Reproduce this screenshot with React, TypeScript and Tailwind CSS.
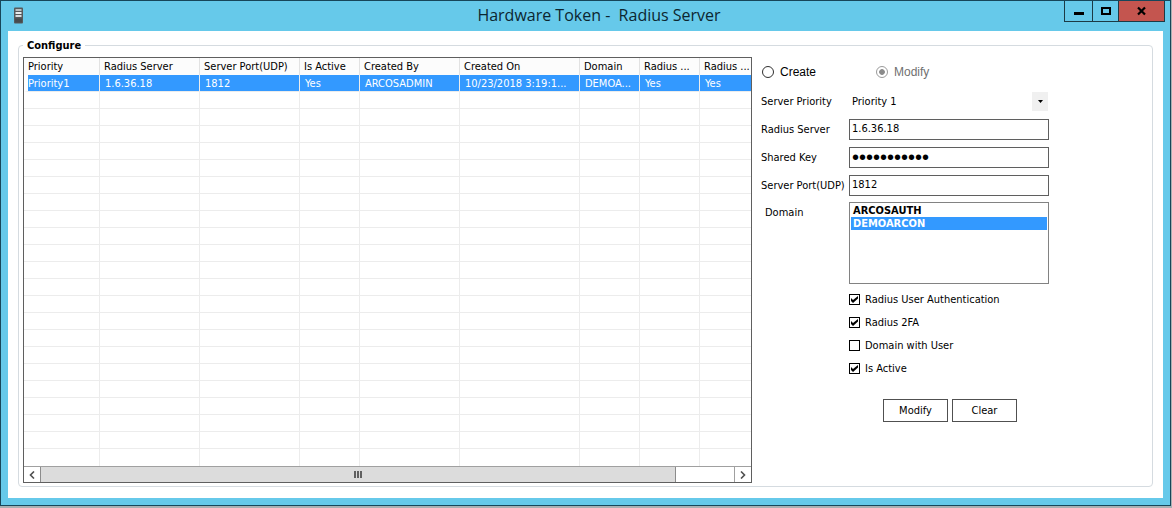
import { FC, ReactNode, useState } from "react";

const columns = [
  { label: "Priority", width: "w-[76px]", value: "Priority1" },
  { label: "Radius Server", width: "w-[100px]", value: "1.6.36.18" },
  { label: "Server Port(UDP)", width: "w-[100px]", value: "1812" },
  { label: "Is Active", width: "w-[60px]", value: "Yes" },
  { label: "Created By", width: "w-[100px]", value: "ARCOSADMIN" },
  { label: "Created On", width: "w-[120px]", value: "10/23/2018 3:19:1..." },
  { label: "Domain", width: "w-[60px]", value: "DEMOA..." },
  { label: "Radius ...", width: "w-[60px]", value: "Yes" },
  { label: "Radius ...", width: "", value: "Yes" },
];

const emptyRows = Array.from({ length: 22 });

const inputClass = "h-[21px] w-[200px] border border-[#5f5f5f] bg-white px-[2px] outline-none";

// Title bar =============================
const TitleBar: FC = () => (
  <header className="flex h-[30px] items-start">
    <div className="flex w-[126px] pl-[6px] pt-[6px]">
      <svg width="9" height="17" viewBox="0 0 9 17" aria-hidden="true">
        <rect x="0" y="0.5" width="9" height="16" rx="1" fill="#565a5c" />
        <rect x="1.5" y="2" width="6" height="2" fill="#b9bfc2" />
        <rect x="1.5" y="5" width="6" height="2" fill="#e8ecee" />
        <rect x="1.5" y="8" width="6" height="2" fill="#d8dcde" />
        <rect x="1" y="11.5" width="7" height="4" fill="#474b4d" />
      </svg>
    </div>
    <h1 className="flex-1 whitespace-pre text-center font-['Open_Sans','Noto_Sans',sans-serif] text-[16px] leading-[29px] text-[#0c2630]">
      {"Hardware Token -  Radius Server"}
    </h1>
    <div className="mr-[5px] flex h-[21px] border border-t-0 border-[#1c3a45]">
      <button aria-label="Minimize" className="flex w-7 justify-center border-r border-[#1c3a45]">
        <svg width="10" height="20" viewBox="0 0 10 20">
          <rect x="0" y="11" width="10" height="3" fill="#000" />
        </svg>
      </button>
      <button aria-label="Maximize" className="flex w-[26px] justify-center border-r border-[#1c3a45]">
        <svg width="10" height="20" viewBox="0 0 10 20">
          <rect x="1" y="7" width="8" height="6" fill="none" stroke="#000" strokeWidth="2" />
        </svg>
      </button>
      <button aria-label="Close" className="flex w-[45px] justify-center bg-[#c4554f]">
        <svg width="9" height="20" viewBox="0 0 9 20">
          <path d="M1 6.5 L8 13.5 M8 6.5 L1 13.5" stroke="#000" strokeWidth="2.2" />
        </svg>
      </button>
    </div>
  </header>
);

// Servers list =============================
const ServerTable: FC = () => (
  <div className="min-w-0 flex-1 border border-[#5f5f5f]">
    <table className="w-full table-fixed border-separate border-spacing-0 whitespace-nowrap text-left">
      <thead>
        <tr className="h-[17px]">
          {columns.map((col, i) => (
            <th
              key={i}
              className={`${col.width} border-r border-[#e2e2e2] bg-[#fcfcfc] p-0 pl-1 font-normal last:border-r-0`}
            >
              {col.label}
            </th>
          ))}
        </tr>
      </thead>
      <tbody>
        <tr className="h-[17px] text-white">
          {columns.map((col, i) => (
            <td
              key={i}
              className="border-b border-r border-[#ececec] bg-[#3399ff] p-0 pl-[5px] last:border-r-0 first:border-l-4 first:border-l-white first:pl-0"
            >
              {col.value}
            </td>
          ))}
        </tr>
        {emptyRows.map((_, row) => (
          <tr key={row} className="group h-[17px]">
            {columns.map((col, i) => (
              <td
                key={i}
                className="border-b border-r border-[#ececec] p-0 last:border-r-0 group-last:border-b-0"
              />
            ))}
          </tr>
        ))}
      </tbody>
    </table>
    <div className="flex h-4 border-t border-[#a0a0a0]">
      <button aria-label="Scroll left" className="flex w-4 items-center justify-center">
        <svg width="6" height="8" viewBox="0 0 6 8">
          <path d="M5 0.5 L1.5 4 L5 7.5" fill="none" stroke="#505050" strokeWidth="1.6" />
        </svg>
      </button>
      <div className="flex-1">
        <div className="flex h-full w-11/12 items-center justify-center gap-px border-x border-[#8c8c8c] bg-[#dcdcdc]">
          <span className="h-[7px] w-[2px] bg-[#606060]" />
          <span className="h-[7px] w-[2px] bg-[#606060]" />
          <span className="h-[7px] w-[2px] bg-[#606060]" />
        </div>
      </div>
      <button
        aria-label="Scroll right"
        className="flex w-[17px] items-center justify-center border-l border-[#a0a0a0]"
      >
        <svg width="6" height="8" viewBox="0 0 6 8">
          <path d="M1 0.5 L4.5 4 L1 7.5" fill="none" stroke="#505050" strokeWidth="1.6" />
        </svg>
      </button>
    </div>
  </div>
);

const Field: FC<{ id: string; label: string; children: ReactNode }> = ({ id, label, children }) => (
  <div className="flex h-7 items-center">
    <label htmlFor={id} className="w-[88px] shrink-0 whitespace-nowrap">
      {label}
    </label>
    {children}
  </div>
);

const Check: FC<{ label: string; initial?: boolean }> = ({ label, initial = false }) => {
  const [checked, setChecked] = useState<boolean>(initial);
  return (
    <label className="flex h-[23px] items-center gap-[5px]">
      <span className="grid size-[11px]">
        <input
          type="checkbox"
          checked={checked}
          onChange={(e) => setChecked(e.target.checked)}
          className="col-start-1 row-start-1 size-[11px] appearance-none border border-black bg-white"
        />
        {checked && (
          <svg
            className="pointer-events-none col-start-1 row-start-1"
            width="11"
            height="11"
            viewBox="0 0 11 11"
          >
            <path d="M2 4 L4 6 L9 2 V4.5 L4 9 L2 7 Z" fill="#000" />
          </svg>
        )}
      </span>
      {label}
    </label>
  );
};

// Server form =============================
const ServerForm: FC = () => {
  const [mode, setMode] = useState<string>("modify");
  const [priority, setPriority] = useState<string>("Priority 1");
  const [server, setServer] = useState<string>("1.6.36.18");
  const [sharedKey, setSharedKey] = useState<string>("12345678901");
  const [port, setPort] = useState<string>("1812");
  const [domains, setDomains] = useState<string[]>(["DEMOARCON"]);

  return (
    <form className="w-[396px] shrink-0 pl-[9px]" onSubmit={(e) => e.preventDefault()}>
      <div className="flex h-[30px] items-center font-['Liberation_Sans',Arial,sans-serif] text-[12px]">
        <label className="flex w-[115px] items-center gap-[6px] pl-px">
          <input
            type="radio"
            name="mode"
            checked={mode === "create"}
            onChange={() => setMode("create")}
            className="size-3 appearance-none rounded-full border border-[#303030] bg-white"
          />
          Create
        </label>
        <label className="flex items-center gap-[6px] text-[#707070]">
          <input
            type="radio"
            name="mode"
            disabled
            checked={mode === "modify"}
            readOnly
            className="size-3 appearance-none rounded-full border border-[#9a9a9a] bg-white bg-radial from-[#8a8a8a] from-35% to-white to-45%"
          />
          Modify
        </label>
      </div>
      <Field id="priority" label="Server Priority">
        <span className="grid w-[200px] items-center">
          <select
            id="priority"
            value={priority}
            onChange={(e) => setPriority(e.target.value)}
            className="col-start-1 row-start-1 h-5 appearance-none bg-white px-[3px] outline-none"
          >
            <option>Priority 1</option>
            <option>Priority 2</option>
          </select>
          <span className="pointer-events-none col-start-1 row-start-1 mr-px flex h-[19px] w-4 items-center justify-center justify-self-end bg-[#f0f0f0]">
            <svg width="5" height="3" viewBox="0 0 5 3">
              <path d="M0 0 H5 L2.5 3 Z" fill="#000" />
            </svg>
          </span>
        </span>
      </Field>
      <Field id="server" label="Radius Server">
        <input
          id="server"
          value={server}
          onChange={(e) => setServer(e.target.value)}
          className={`${inputClass} pb-[2px]`}
        />
      </Field>
      <Field id="key" label="Shared Key">
        <input
          id="key"
          type="password"
          value={sharedKey}
          onChange={(e) => setSharedKey(e.target.value)}
          className={`${inputClass} font-['Liberation_Sans',Arial,sans-serif] text-[20px]`}
        />
      </Field>
      <Field id="port" label="Server Port(UDP)">
        <input
          id="port"
          value={port}
          onChange={(e) => setPort(e.target.value)}
          className={`${inputClass} pb-[2px]`}
        />
      </Field>
      <div className="flex pt-[3px]">
        <label htmlFor="domain" className="w-[88px] shrink-0 pl-1 pt-[3px]">
          Domain
        </label>
        <select
          id="domain"
          multiple
          size={6}
          value={domains}
          onChange={(e) => setDomains(Array.from(e.target.selectedOptions, (o) => o.value))}
          className="h-[82px] w-[200px] overflow-hidden border border-[#828282] p-px outline-none"
        >
          {["ARCOSAUTH", "DEMOARCON"].map((domain) => (
            <option
              key={domain}
              className="h-[13px] min-h-0 p-0 pl-[2px] font-bold leading-[13px] checked:bg-linear-to-r checked:from-[#3399ff] checked:to-[#3399ff] checked:[-webkit-text-fill-color:white]"
            >
              {domain}
            </option>
          ))}
        </select>
      </div>
      <div className="pl-[88px] pt-1">
        <Check label="Radius User Authentication" initial />
        <Check label="Radius 2FA" initial />
        <Check label="Domain with User" />
        <Check label="Is Active" initial />
      </div>
      <div className="flex gap-1 pl-[122px] pt-[19px]">
        <button className="h-[23px] w-[65px] border border-[#505050] bg-white">Modify</button>
        <button className="h-[23px] w-[65px] border border-[#505050] bg-white">Clear</button>
      </div>
    </form>
  );
};

const App: FC = () => {
  return (
    <div className="min-h-screen bg-[#a9b0b3] pb-[2px] pr-px">
      <div className="border border-[#17465a] bg-[#66c9ea] px-[7px] pb-[7px] font-['DejaVu_Sans_Condensed','DejaVu_Sans',sans-serif] text-[11px] leading-[15px] text-black">
        <div className="-mr-[7px]">
          <TitleBar />
        </div>
        <main className="bg-white px-[10px] pb-[11px] pt-[7px]">
          <fieldset className="min-w-0 rounded border border-[#d5dbe0] px-1 pb-[3px]">
            <legend className="px-1 font-bold">Configure</legend>
            <div className="flex pt-1">
              <ServerTable />
              <ServerForm />
            </div>
          </fieldset>
        </main>
      </div>
    </div>
  );
};

export default App;
